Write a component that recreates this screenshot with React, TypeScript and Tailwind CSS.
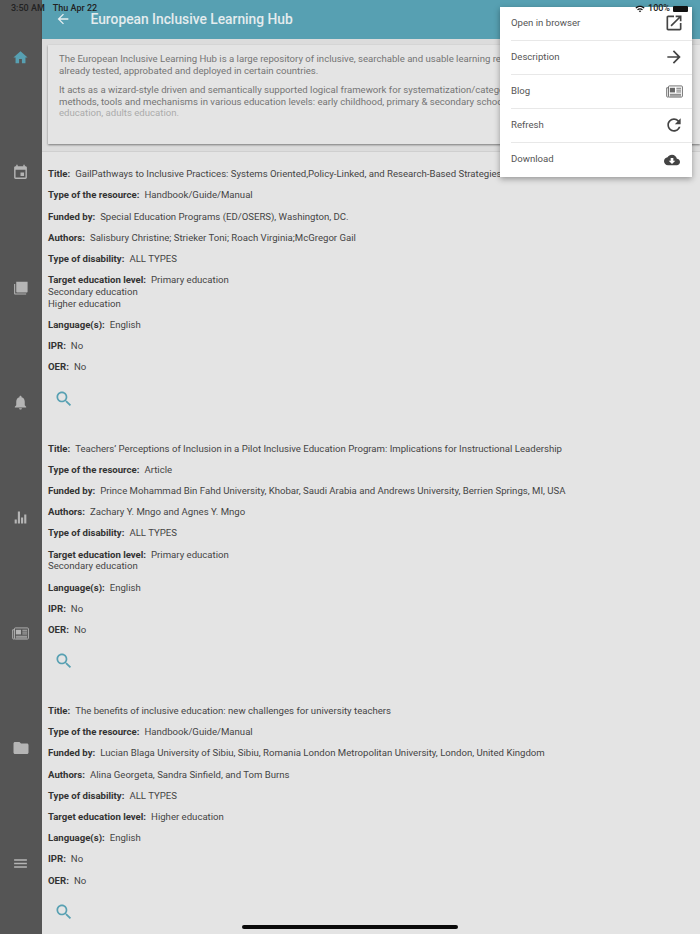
import React from "react";

const FONT = "font-['Roboto',sans-serif]";

function Mi({ d, className }: { d: string; className: string }) {
  return (
    <svg viewBox="0 0 24 24" fill="currentColor" className={className}>
      <path d={d} />
    </svg>
  );
}

function Paper({ className }: { className: string }) {
  return (
    <svg viewBox="0 0 18 14" fill="none" stroke="currentColor" className={className}>
      <rect x="2.5" y="1" width="15" height="12" rx="1" strokeWidth="1" />
      <path d="M2.5 3H.6v9a1 1 0 0 0 1 1h1" strokeWidth="1" />
      <rect x="4" y="3" width="5.5" height="5" fill="currentColor" stroke="none" />
      <path d="M11 3.5h5M11 5.5h5M11 7.5h5M4 10h12M4 11.7h12" strokeWidth="1" />
    </svg>
  );
}

const ICONS = {
  home: "M10 20v-6h4v6h5v-8h3L12 3 2 12h3v8z",
  event: "M17 12h-5v5h5v-5zM16 1v2H8V1H6v2H5c-1.11 0-1.99.9-1.99 2L3 19c0 1.1.89 2 2 2h14c1.1 0 2-.9 2-2V5c0-1.1-.9-2-2-2h-1V1h-2zm3 18H5V8h14v11z",
  forum: "M6 4h16v14c0 .6-.4 1-1 1H7c-.6 0-1-.4-1-1V4zM3 7h1.5v13.5H20V22H4.500C3.600 22 3 21.400 3 20.500V7z",
  bell: "M12 22c1.1 0 2-.9 2-2h-4c0 1.1.89 2 2 2zm6-6v-5c0-3.07-1.64-5.64-4.5-6.32V4c0-.83-.67-1.5-1.5-1.5s-1.5.67-1.5 1.5v.68C7.63 5.36 6 7.92 6 11v5l-2 2v1h16v-1l-2-2z",
  chart: "M3.750 14.900h3v5.600h-3zM8.250 3.500h3v17h-3zM12.750 12h3v8.500h-3zM17.250 7.800h3v12.700h-3z",
  folder: "M10 4H4c-1.1 0-1.99.9-1.99 2L2 18c0 1.1.9 2 2 2h16c1.1 0 2-.9 2-2V8c0-1.1-.9-2-2-2h-8l-2-2z",
  menu: "M3 18h18v-2H3v2zm0-5h18v-2H3v2zm0-7v2h18V6H3z",
  search: "M15.5 14h-.79l-.28-.27C15.41 12.59 16 11.11 16 9.5 16 5.91 13.09 3 9.5 3S3 5.91 3 9.5 5.91 16 9.5 16c1.61 0 3.09-.59 4.23-1.57l.27.28v.79l5 4.99L20.49 19l-4.99-5zm-6 0C7.01 14 5 11.99 5 9.5S7.01 5 9.5 5 14 7.01 14 9.5 11.99 14 9.5 14z",
  back: "M20 11H7.83l5.59-5.59L12 4l-8 8 8 8 1.41-1.41L7.83 13H20v-2z",
  open: "M19 19H5V5h7V3H5c-1.11 0-2 .9-2 2v14c0 1.1.89 2 2 2h14c1.1 0 2-.9 2-2v-7h-2v7zM14 3v2h3.59l-9.83 9.83 1.41 1.41L19 6.41V10h2V3h-7z",
  arrow: "M12 4l-1.41 1.41L16.17 11H4v2h12.17l-5.58 5.59L12 20l8-8z",
  refresh: "M17.65 6.35C16.2 4.9 14.21 4 12 4c-4.42 0-7.99 3.58-7.99 8s3.57 8 7.99 8c3.73 0 6.84-2.55 7.73-6h-2.08c-.82 2.33-3.04 4-5.65 4-3.31 0-6-2.69-6-6s2.69-6 6-6c1.66 0 3.14.69 4.22 1.78L13 11h7V4l-2.35 2.35z",
  cloud: "M19.35 10.04C18.67 6.59 15.64 4 12 4 9.11 4 6.6 5.64 5.35 8.04 2.34 8.36 0 10.91 0 14c0 3.31 2.69 6 6 6h13c2.76 0 5-2.24 5-5 0-2.64-2.05-4.78-4.65-4.96zM17 13l-5 5-5-5h3V9h4v4h3z",
  wifi: "M1 9l2 2c4.97-4.97 13.03-4.97 18 0l2-2C16.93 2.93 7.08 2.93 1 9zm8 8l3 3 3-3c-1.65-1.66-4.34-1.66-6 0zm-4-4l2 2c2.76-2.76 7.24-2.76 10 0l2-2C15.14 9.14 8.87 9.14 5 13z",
};

type Resource = { label: string; value: string; extra?: string[] }[];

const resources: Resource[] = [
  [
    { label: "Title:", value: "GailPathways to Inclusive Practices: Systems Oriented,Policy-Linked, and Research-Based Strategies That Work." },
    { label: "Type of the resource:", value: "Handbook/Guide/Manual" },
    { label: "Funded by:", value: "Special Education Programs (ED/OSERS), Washington, DC." },
    { label: "Authors:", value: "Salisbury Christine; Strieker Toni; Roach Virginia;McGregor Gail" },
    { label: "Type of disability:", value: "ALL TYPES" },
    { label: "Target education level:", value: "Primary education", extra: ["Secondary education", "Higher education"] },
    { label: "Language(s):", value: "English" },
    { label: "IPR:", value: "No" },
    { label: "OER:", value: "No" },
  ],
  [
    { label: "Title:", value: "Teachers’ Perceptions of Inclusion in a Pilot Inclusive Education Program: Implications for Instructional Leadership" },
    { label: "Type of the resource:", value: "Article" },
    { label: "Funded by:", value: "Prince Mohammad Bin Fahd University, Khobar, Saudi Arabia and Andrews University, Berrien Springs, MI, USA" },
    { label: "Authors:", value: "Zachary Y. Mngo and Agnes Y. Mngo" },
    { label: "Type of disability:", value: "ALL TYPES" },
    { label: "Target education level:", value: "Primary education", extra: ["Secondary education"] },
    { label: "Language(s):", value: "English" },
    { label: "IPR:", value: "No" },
    { label: "OER:", value: "No" },
  ],
  [
    { label: "Title:", value: "The benefits of inclusive education: new challenges for university teachers" },
    { label: "Type of the resource:", value: "Handbook/Guide/Manual" },
    { label: "Funded by:", value: "Lucian Blaga University of Sibiu, Sibiu, Romania London Metropolitan University, London, United Kingdom" },
    { label: "Authors:", value: "Alina Georgeta, Sandra Sinfield, and Tom Burns" },
    { label: "Type of disability:", value: "ALL TYPES" },
    { label: "Target education level:", value: "Higher education" },
    { label: "Language(s):", value: "English" },
    { label: "IPR:", value: "No" },
    { label: "OER:", value: "No" },
  ],
];

function Sidebar() {
  const cls = "flex h-[115.1px] items-center justify-center";
  const icon = "h-[17px] w-[17px] text-[#b5b5b5]";
  return (
    <div className="flex h-[934px] w-[41.5px] shrink-0 flex-col bg-[#555555]">
      <div className={cls}><Mi d={ICONS.home} className="h-[17px] w-[17px] text-[#57a0b2]" /></div>
      <div className={cls}><Mi d={ICONS.event} className={icon} /></div>
      <div className={cls}><Mi d={ICONS.forum} className={icon} /></div>
      <div className={cls}><Mi d={ICONS.bell} className={icon} /></div>
      <div className={cls}><Mi d={ICONS.chart} className={icon} /></div>
      <div className={cls}><Paper className="h-[13px] w-[17px] text-[#b5b5b5]" /></div>
      <div className={cls}><Mi d={ICONS.folder} className="h-[18px] w-[18px] text-[#b5b5b5]" /></div>
      <div className={cls}><Mi d={ICONS.menu} className={icon} /></div>
    </div>
  );
}

function ResourceBlock({ rows }: { rows: Resource }) {
  return (
    <div className="flex flex-col gap-[9.4px]">
      {rows.map((r) => (
        <div key={r.label} className="text-[9.6px] leading-[11.8px] text-[#444444]">
          <div className="whitespace-nowrap">
            <span className="font-bold text-[#333333]">{r.label}</span>
            <span className="ml-[5px]">{r.value}</span>
          </div>
          {r.extra?.map((x) => <div key={x}>{x}</div>)}
        </div>
      ))}
      <div className="mt-[6px] flex h-[21px] pl-[6px]">
        <Mi d={ICONS.search} className="h-[20px] w-[20px] text-[#57a0b2]" />
      </div>
    </div>
  );
}

function PopupMenu() {
  const items = [
    { label: "Open in browser", icon: <Mi d={ICONS.open} className="h-[20px] w-[20px] text-[#444444]" /> },
    { label: "Description", icon: <Mi d={ICONS.arrow} className="h-[20px] w-[20px] text-[#444444]" /> },
    { label: "Blog", icon: <Paper className="ml-[1px] h-[13px] w-[17px] shrink-0 text-[#666666]" /> },
    { label: "Refresh", icon: <Mi d={ICONS.refresh} className="h-[20px] w-[20px] text-[#444444]" /> },
    { label: "Download", icon: <Mi d={ICONS.cloud} className="mr-[4px] h-[18px] w-[18px] text-[#444444]" /> },
  ];
  return (
    <div className="absolute left-[500px] top-[6.6px] w-[191.5px] bg-white shadow-[0_2px_6px_rgba(0,0,0,0.35)]">
      {items.map((it) => (
        <div key={it.label} className="ml-[11px] flex h-[34px] items-center justify-between border-b border-[#e8e8e8] pr-[8px] text-[9.6px] text-[#555555] last:border-b-0">
          <span>{it.label}</span>
          <span className="flex w-[20px] shrink-0 items-center justify-center">{it.icon}</span>
        </div>
      ))}
    </div>
  );
}

export default function App() {
  return (
    <div className={`${FONT} relative flex h-[934px] w-[700px] overflow-hidden bg-[#e4e4e4]`}>
      <Sidebar />
      <div className="flex min-w-0 flex-1 flex-col">
        <div className="flex h-[38.5px] shrink-0 items-center bg-[#57a0b2] shadow-[0_1px_2px_rgba(0,0,0,0.25)]">
          <Mi d={ICONS.back} className="ml-[13px] h-[16px] w-[16px] text-[#e8eff1]" />
          <span className="ml-[20px] pt-[1px] text-[13.8px] font-medium text-[#e4ecee]">European Inclusive Learning Hub</span>
        </div>
        <div className="h-[113px] shrink-0 border-b border-[#cfcfcf] bg-[#dcdcdc] pl-[6.5px] pt-[6.5px]">
          <div className="h-[99px] overflow-hidden bg-[#e4e4e4] pl-[11px] pt-[8px] text-[9.6px] leading-[11.7px] text-[#747474] shadow-[0_1px_2px_rgba(0,0,0,0.45)]">
            <p className="whitespace-nowrap">The European Inclusive Learning Hub is a large repository of inclusive, searchable and usable learning resources</p>
            <p className="whitespace-nowrap">already tested, approbated and deployed in certain countries.</p>
            <p className="mt-[7.5px] whitespace-nowrap">It acts as a wizard-style driven and semantically supported logical framework for systematization/categorization of</p>
            <p className="whitespace-nowrap">methods, tools and mechanisms in various education levels: early childhood, primary &amp; secondary school, higher</p>
            <p className="whitespace-nowrap text-[#ababab]">education, adults education.</p>
          </div>
        </div>
        <div className="flex flex-col gap-[33px] overflow-hidden pl-[6.5px] pt-[16.8px]">
          {resources.map((rows, i) => <ResourceBlock key={i} rows={rows} />)}
        </div>
      </div>

      <PopupMenu />

      <div className="absolute left-[11px] top-[3px] flex gap-[8px] text-[9px] font-medium leading-[11px] text-[#222222]">
        <span>3:50 AM</span>
        <span>Thu Apr 22</span>
      </div>
      <div className="absolute right-[12px] top-[3px] flex items-center gap-[3px] text-[9px] font-medium leading-[11px] text-[#222222]">
        <Mi d={ICONS.wifi} className="h-[10px] w-[10px] text-[#111111]" />
        <span>100%</span>
        <span className="h-[6px] w-[15px] rounded-[1px] bg-[#111111]" />
      </div>
      <div className="absolute bottom-[5px] left-[242px] h-[4px] w-[216px] rounded-full bg-[#0a0a0a]" />
    </div>
  );
}
